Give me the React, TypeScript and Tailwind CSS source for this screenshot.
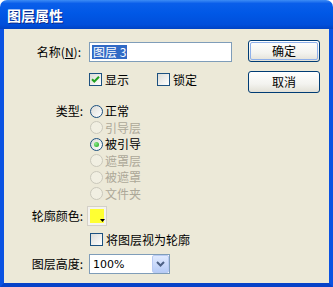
import React from "react";

const cjk = "font-['SimSun','Noto_Sans_CJK_SC',sans-serif]";

function CheckBox({ checked }: { checked?: boolean }) {
  return (
    <span className="w-[13px] h-[13px] shrink-0 border border-[#1C5180] bg-[linear-gradient(135deg,#DCDCD7,#FFFFFF)] flex items-center justify-center">
      {checked && (
        <svg width="9" height="9" viewBox="0 0 9 9">
          <path d="M1 4.2 L3.3 6.5 L8 1.8" fill="none" stroke="#21A121" strokeWidth="2" />
        </svg>
      )}
    </span>
  );
}

function Radio({ checked, disabled }: { checked?: boolean; disabled?: boolean }) {
  return (
    <span
      className={
        disabled
          ? "w-[13px] h-[13px] shrink-0 rounded-full border border-[#CAC8BB] bg-[#F1EFE2]"
          : "w-[13px] h-[13px] shrink-0 rounded-full border border-[#1C5180] bg-[linear-gradient(135deg,#DCDCD7,#FFFFFF)] flex items-center justify-center"
      }
    >
      {checked && (
        <span className="w-[5px] h-[5px] rounded-full bg-[radial-gradient(circle_at_35%_35%,#8CE88A,#19A516)]" />
      )}
    </span>
  );
}

function XpButton({ label, focused }: { label: string; focused?: boolean }) {
  return (
    <div className="w-[72px] h-[22px] rounded-[3px] border border-[#003C74] bg-[linear-gradient(#FFFFFF,#F3F3EF_60%,#E2E0D6)] p-[1px]">
      <div
        className={
          focused
            ? "w-full h-full rounded-[2px] border-[1.5px] border-[#8FB0EA] flex items-center justify-center"
            : "w-full h-full flex items-center justify-center"
        }
      >
        <span className="leading-none">{label}</span>
      </div>
    </div>
  );
}

const typeOptions = [
  { label: "正常", checked: false, disabled: false },
  { label: "引导层", checked: false, disabled: true },
  { label: "被引导", checked: true, disabled: false },
  { label: "遮罩层", checked: false, disabled: true },
  { label: "被遮罩", checked: false, disabled: true },
  { label: "文件夹", checked: false, disabled: true },
];

export default function App() {
  return (
    <div className={`w-[333px] h-[287px] flex flex-col text-[12px] text-black ${cjk}`}>
      {/* title bar */}
      <div className="h-[29px] rounded-t-[7px] bg-[linear-gradient(#3D8CF5,#0A5EEA_12%,#0058E6_45%,#004FDB_85%,#0043C4)] flex items-center pl-[7px]">
        <span className="text-white font-bold text-[14px] leading-none [text-shadow:1px_1px_0_#0C2A8A]">图层属性</span>
      </div>

      {/* body */}
      <div className="flex-1 flex bg-[#ECE9D8] border-x-4 border-b-4 border-x-[#0A52E2] border-b-[#0642C8]">
        <div className="w-[244px] pt-[13px] flex flex-col">
          {/* name */}
          <div className="flex items-center h-[20px]">
            <span className="w-[80px] text-right pr-[3px] leading-none">
              名称(<span className="underline">N</span>):
            </span>
            <div className="ml-[5px] w-[143px] h-[20px] bg-white border border-[#7F9DB9] flex items-center pl-[2px]">
              <span className="bg-[#316AC5] text-white leading-none h-[14px] px-[1px] flex items-center">图层 3</span>
            </div>
          </div>

          {/* visible / lock */}
          <div className="flex items-center h-[13px] mt-[11px]">
            <div className="ml-[85px] flex items-center">
              <CheckBox checked />
              <span className="ml-[3px] leading-none">显示</span>
            </div>
            <div className="ml-[28px] flex items-center">
              <CheckBox />
              <span className="ml-[3px] leading-none">锁定</span>
            </div>
          </div>

          {/* type */}
          <div className="flex mt-[17px]">
            <span className="w-[80px] text-right pr-[1px] h-[16.5px] flex items-center justify-end leading-none">类型:</span>
            <div className="ml-[6px] flex flex-col">
              {typeOptions.map((o) => (
                <div key={o.label} className="h-[16.5px] flex items-center">
                  <Radio checked={o.checked} disabled={o.disabled} />
                  <span className={o.disabled ? "ml-[2px] leading-none text-[#ACA899]" : "ml-[2px] leading-none"}>
                    {o.label}
                  </span>
                </div>
              ))}
            </div>
          </div>

          {/* outline color */}
          <div className="flex items-center h-[20px] mt-[4px]">
            <span className="w-[80px] text-right pr-[1px] leading-none">轮廓颜色:</span>
            <div className="ml-[3px] w-[20px] h-[20px] border border-[#D4D0C8] bg-[#F4F3EE] p-[2px]">
              <div className="relative w-full h-full bg-[#FFFF33]">
                <svg className="absolute right-[-1px] bottom-[1px]" width="5" height="3" viewBox="0 0 5 3">
                  <path d="M0 0 H5 L2.5 3 Z" fill="#000" />
                </svg>
              </div>
            </div>
          </div>

          {/* view as outline */}
          <div className="flex items-center h-[13px] mt-[7px]">
            <div className="ml-[86px] flex items-center">
              <CheckBox />
              <span className="ml-[3px] leading-none">将图层视为轮廓</span>
            </div>
          </div>

          {/* layer height */}
          <div className="flex items-center h-[20px] mt-[8px]">
            <span className="w-[80px] text-right pr-[1px] leading-none">图层高度:</span>
            <div className="ml-[5px] w-[81px] h-[20px] bg-white border border-[#7F9DB9] flex items-center">
              <span className="pl-[3px] flex-1 leading-none font-['DejaVu_Sans',sans-serif] text-[11px]">100%</span>
              <div className="w-[17px] h-[18px] mr-[0px] rounded-[2px] border border-[#B9CBF3] bg-[linear-gradient(#E0EAFF,#B7CCF7)] flex items-center justify-center">
                <svg width="9" height="6" viewBox="0 0 9 6">
                  <path d="M1 1 L4.5 4.5 L8 1" fill="none" stroke="#4D6185" strokeWidth="2" />
                </svg>
              </div>
            </div>
          </div>
        </div>

        {/* buttons */}
        <div className="pt-[11px] flex flex-col gap-[9px]">
          <XpButton label="确定" focused />
          <XpButton label="取消" />
        </div>
      </div>
    </div>
  );
}
